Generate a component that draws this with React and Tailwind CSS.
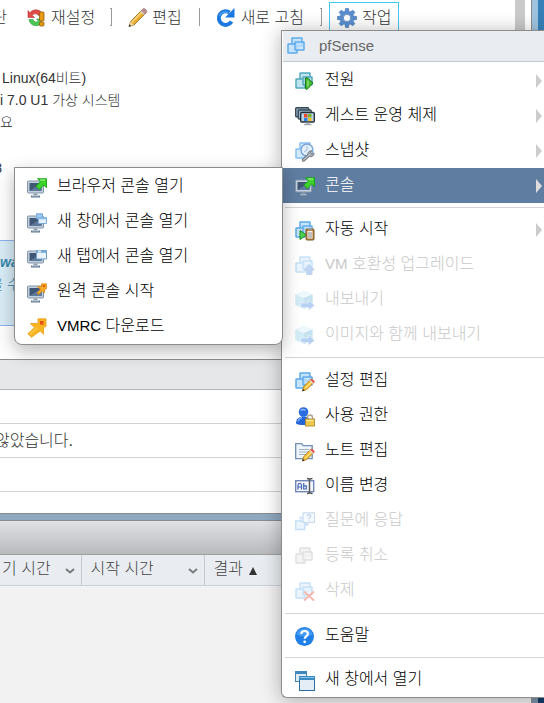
const Boxes = ({ stroke = '#5eaaea', fill = '#c4e3fd' }) => (
  <g fill={fill} stroke={stroke} strokeWidth="1.5">
    <rect x="5" y="1" width="10" height="8" rx="0.5" />
    <rect x="1" y="7" width="9" height="9" rx="0.5" />
    <rect x="8" y="5" width="9" height="8" rx="0.5" fillOpacity="0.75" />
  </g>
)

const Monitor = () => (
  <g>
    <rect x="0.5" y="3" width="16" height="12" rx="1" fill="#c3d0de" stroke="#8194aa" />
    <rect x="2.5" y="5" width="12" height="8" fill="#3f5674" />
    <path d="M2.5 13 L14.5 5 V13 Z" fill="#5d7899" />
    <path d="M6.5 15.5h4v2h-4z" fill="#8b9caf" />
    <path d="M4 17.5h9v2H4z" fill="#5f7690" />
    <path d="M5 17.5h7v0.8H5z" fill="#d5dee7" />
  </g>
)

const SmallPencil = () => (
  <g>
    <path d="M7.5 19 8.8 14.5 16 7.3l3 3L11.8 17.500z" fill="#f6bd2f" stroke="#a9731a" strokeWidth="0.8" />
    <path d="m10 16.3 7.5-7.5" stroke="#ffe48a" strokeWidth="1.2" />
    <path d="m15.3 8 1.6-1.6 3 3-1.6 1.6z" fill="#e84f4f" />
    <path d="m14.5 8.8.8-.8 3 3-.8.8z" fill="#d7dce0" />
    <path d="m7.2 19.3.7-2.4 1.7 1.7z" fill="#222" />
  </g>
)

const drawings = {
  vm: <Boxes />,
  power: (
    <>
      <Boxes stroke="#52a8bf" fill="#bfe4ee" />
      <path d="M10.5 6 12 5.5 18 11 12 17.500l-1.500-.7z" fill="#42b82e" stroke="#1d7a18" />
      <path d="M13 8.500v6" stroke="#b6ee93" />
    </>
  ),
  guest: (
    <>
      <rect x="0.7" y="0.7" width="13" height="9" rx="1" fill="#8fb5cf" stroke="#3b4853" strokeWidth="1.4" />
      <rect x="3.2" y="3" width="13" height="9" rx="1" fill="#8fb5cf" stroke="#3b4853" strokeWidth="1.4" />
      <rect x="5.7" y="5.5" width="13.6" height="9.5" rx="1" fill="#b8d2e6" stroke="#28323b" strokeWidth="1.4" />
      <path d="M9 7h3.5v3.5H9z" fill="#e64a26" />
      <path d="M13 7h3.500v3.500H13z" fill="#74b52b" />
      <path d="M9 11h3.500v3H9z" fill="#2f7fe0" />
      <path d="M13 11h3.500v3H13z" fill="#f5c11b" />
      <path d="M11 15.500h3.500V17h2v1.200H9V17h2z" fill="#a4adb5" />
    </>
  ),
  snapshot: (
    <>
      <Boxes stroke="#86c0f2" fill="#d3e9fc" />
      <circle cx="12" cy="8" r="6" fill="#e3f0fb" stroke="#7aa6d6" strokeWidth="1.4" />
      <path d="M12 4v4l-3 2" stroke="#9cb9d8" fill="none" />
      <path d="m8.5 18 6-5.5" stroke="#6f767e" strokeWidth="3.4" strokeLinecap="round" />
      <path d="M13 13a3.3 3.3 0 0 1 4-4.2L15.6 10.500l1.6 1.6 1.8-1.2a3.3 3.3 0 0 1-4.6 3.6z" fill="#a5abb1" stroke="#6f767e" strokeWidth="0.8" />
      <path d="m8.5 18 6-5.5" stroke="#b9bec3" strokeWidth="1.6" strokeLinecap="round" />
    </>
  ),
  browser: (
    <>
      <Monitor />
      <path d="M10.500.7h9V9.700l-2.800-2.700-4.400 4.500-3.300-3.300 4.400-4.500z" fill="#3ed32b" stroke="#16a01a" strokeWidth="0.9" />
      <path d="M13 2h5" stroke="#adf59a" />
    </>
  ),
  newWindow: (
    <>
      <Monitor />
      <path d="M9.5.8h6v5h-6z" fill="#9cc7ee" stroke="#74a7d8" />
      <path d="M11.5 4.5h8v6h-8z" fill="#e3f1fc" stroke="#7cabd8" />
      <path d="M11.5 4.5h8v1.8h-8z" fill="#8bbde9" />
    </>
  ),
  newTab: (
    <>
      <Monitor />
      <path d="M9.5 2.5h10v8.5h-10z" fill="#e8f3fc" stroke="#6f9fca" />
      <path d="M9.5 2.5h10v2.3h-10z" fill="#76a9d6" />
      <path d="M11 2.5h3v2h-3z" fill="#d6eafb" />
    </>
  ),
  remote: (
    <>
      <Monitor />
      <path d="M14.5.8h5v5h-1.4l-.7 4.2-2-2.2-3.6 3.7-1.7-1.7 3.6-3.6L10.4 4l4.1-.6z" fill="#f7a91f" stroke="#d9850f" strokeWidth="0.7" />
      <path d="M16 2h2v2h-2z" fill="#e2591a" />
    </>
  ),
  vmrc: (
    <>
      <path d="M11 .8h8v8h-2.500v7.500l-3.200-3.400L4.500 19.300l-3.700-3.600 6.700-6.200L3.200 5.500H11z" fill="#f9b422" stroke="#e8a01a" strokeWidth="0.8" strokeLinejoin="round" />
      <rect x="13" y="3" width="3.6" height="3.6" fill="#e5521b" />
      <path d="m3 16.500 7-6.8" stroke="#ffd668" />
    </>
  ),
  autostart: (
    <>
      <Boxes />
      <path d="M5 9.500 11.500 14 5 18.500z" fill="#4fd152" stroke="#198c25" />
      <rect x="11" y="8" width="8" height="11" rx="1" fill="#b88642" stroke="#7d5520" />
      <path d="M12.500 10h5v7.500h-5z" fill="#f4f2ec" />
      <path d="M13 12h4M13 14h4M13 16h4" stroke="#777" strokeWidth="0.8" />
      <path d="M13 7h4v2h-4z" fill="#999" />
    </>
  ),
  upgrade: (
    <>
      <Boxes />
      <path d="m14 8.500 5.500 5.500h-2.500v4.500h-5.500v-4.500H9z" fill="#4b86da" stroke="#3a75c4" strokeWidth="0.8" />
    </>
  ),
  exportVm: (
    <>
      <path d="M9 0 17.500 3.500v10.500L9 18 .3 14V3.500z" fill="#86cbe6" />
      <path d="M9 0 17.500 3.500 9 7 .3 3.500z" fill="#c9ecf6" />
      <path d="M9 7 17.500 3.500v10.500L9 18z" fill="#5badd0" />
      <path d="M6 12h7.500V9l6 5.500-6 5v-3H6z" fill="#2f7ade" stroke="#d9eafb" strokeWidth="0.6" />
    </>
  ),
  settings: (
    <>
      <Boxes />
      <SmallPencil />
    </>
  ),
  permission: (
    <>
      <circle cx="8.5" cy="5" r="4.8" fill="#2a6be0" />
      <path d="M1 16.500c0-4.500 3-7 7.500-7s7 2.500 7 7c-3 2-11.500 2-14.500 0z" fill="#2464d8" />
      <path d="M5.500 3.500a3.500 3 0 0 1 5 0" stroke="#8fb9ff" fill="none" strokeWidth="1.400" />
      <path d="M3 14.500c.5-2 2-3.500 4-3.800" stroke="#7dafff" fill="none" strokeWidth="1.400" />
      <path d="M12.500 12.500v-2a2.500 2.500 0 0 1 5 0v2" stroke="#aaa794" strokeWidth="1.500" fill="none" />
      <rect x="10.500" y="12" width="9" height="7" fill="#efc74a" stroke="#b08d30" strokeWidth="0.900" />
      <path d="M11.500 13.500h7" stroke="#fff0a6" />
    </>
  ),
  note: (
    <>
      <path d="M.7 1.700h6l1.500 2h9v13H.7z" fill="#f0f5fa" stroke="#6f8fb3" strokeWidth="1.300" />
      <path d="M4 7.500h10M4 10h10M4 12.500h7" stroke="#9fb2c6" />
      <SmallPencil />
    </>
  ),
  rename: (
    <>
      <rect x="0.700" y="3.700" width="18" height="11" fill="#f3f6fd" stroke="#7287b8" strokeWidth="1.400" />
      <path d="M3 12.500V8l1-1.500h1.500l1 1.500v4.500M3 10h3.500M8.700 6v6h2.600V8.800H8.700" fill="none" stroke="#4566b8" strokeWidth="1.200" />
      <path d="M12 1.500c2 0 2.500.5 2.500 1.500v12c0 1-.5 1.500-2.500 1.500M17.500 1.500c-2 0-3 .5-3 1.500M14.500 15c0 1 1 1.500 3 1.500" fill="none" stroke="#555" strokeWidth="1.400" />
    </>
  ),
  question: (
    <>
      <path d="M5 5h8v8H5z" fill="#b9dcfa" stroke="#5eaaea" />
      <path d="M.7 9h9v8.500h-9z" fill="#c4e3fd" stroke="#5eaaea" strokeWidth="1.400" />
      <path d="M8 .8h11.500v9.500H14l-2.500 2.500v-2.500H8z" fill="#e9f3fc" stroke="#6a9bd0" strokeWidth="1.200" />
      <path d="M12.200 4.200c0-2 3.500-2 3.500 0 0 1.300-1.800 1.200-1.800 2.500M13.900 7.800v1" fill="none" stroke="#4c7fbd" strokeWidth="1.200" />
    </>
  ),
  unregister: <Boxes stroke="#a8a8a8" fill="#e2e2e2" />,
  remove: (
    <>
      <Boxes />
      <path d="m9 9.500 10 9M19 9.500l-10 9" stroke="#e0371e" strokeWidth="2" />
    </>
  ),
  help: (
    <>
      <circle cx="9.500" cy="9.500" r="9.500" fill="#2080e8" />
      <path d="M1.500 7.500a8.300 8.300 0 0 1 16 0c-4 2.500-12 2.500-16 0z" fill="#469cf5" />
      <path d="M6.300 7c0-4 6.600-4 6.600-.2 0 2.300-3.200 2.400-3.200 4.900" fill="none" stroke="#fff" strokeWidth="2.200" />
      <circle cx="9.700" cy="14.800" r="1.400" fill="#fff" />
    </>
  ),
  windows: (
    <>
      <rect x="0.500" y="0.500" width="11" height="10" fill="#dfeaf4" stroke="#4885b4" />
      <path d="M0 0h12v3H0z" fill="#3f86bd" />
      <rect x="4.500" y="5.500" width="15" height="14" fill="#e4edf6" stroke="#2f6f9f" />
      <path d="M4 5h16v4H4z" fill="#3c8ac4" />
      <path d="M5 6h14v1H5z" fill="#8cc3ec" />
    </>
  ),
  reset: (
    <>
      <path d="M1 2.500v7h6.500L5.300 7.300C7 5.200 10 5.500 11.500 7.500L15.500 6C13 1 6.500.5 3 4.700z" fill="#e04b49" stroke="#b52d33" strokeWidth="0.600" />
      <path d="M2 11.500c1 6.500 8.500 8 12 4V11H9.500l2 2c-2 2-4.500 1-5.500-1.500z" fill="#4bc654" stroke="#29953b" strokeWidth="0.600" />
      <rect x="12.500" y="4" width="4.500" height="9" rx="1" fill="#e69a16" stroke="#8f5d0d" strokeWidth="0.800" />
      <rect x="12.500" y="14" width="4.500" height="4" rx="1" fill="#e69a16" stroke="#8f5d0d" strokeWidth="0.800" />
    </>
  ),
  pencil: (
    <>
      <path d="m1 18.500 1.500-5L14 2 17.500 5.500 6 17z" fill="#e8ab34" stroke="#8d6420" strokeWidth="0.800" />
      <path d="m4 14 10.500-10.500" stroke="#ffdc82" strokeWidth="1.300" />
      <path d="m13.500 2.500 1.800-1.800c1-.8 4.200 2 3.300 3.300L17 6z" fill="#c68a8b" stroke="#7f5a5c" strokeWidth="0.600" />
      <path d="m12.500 3.500 1-1L17 6l-1 1z" fill="#c7ccd1" />
      <path d="m1 18.500 1.500-5 3.500 3.500z" fill="#ecd3a4" />
      <path d="m.7 18.800.8-2.500 1.700 1.700z" fill="#333" />
    </>
  ),
  refresh: (
    <>
      <path d="M15.500 13.500A6.800 6.800 0 1 1 13.500 4.500" fill="none" stroke="#1b78e0" strokeWidth="4" />
      <path d="M18.500 0v9.500H9z" fill="#1b78e0" />
      <path d="M3.500 8A6 6 0 0 1 12 4.500" fill="none" stroke="#55a9f5" strokeWidth="1.200" />
    </>
  ),
  gear: (
    <>
      <g fill="#5a8ed0" stroke="#3e6ca8" strokeWidth="0.600">
        {[0, 45, 90, 135, 180, 225, 270, 315].map((a) => (
          <path key={a} d="M8 4 8.500.4h3L12 4z" transform={`rotate(${a} 10 10)`} />
        ))}
      </g>
      <circle cx="10" cy="10" r="5.500" fill="none" stroke="#5a8ed0" strokeWidth="3.400" />
      <circle cx="10" cy="10" r="3.700" fill="#fff" stroke="#4a76ae" strokeWidth="0.800" />
    </>
  ),
}

const Icon = ({ name, className = '' }) => (
  <svg viewBox="0 0 20 20" className={`size-5 shrink-0 ${className}`} aria-hidden="true">
    {drawings[name]}
  </svg>
)

const groups = [
  {
    pad: 'pt-px pb-1',
    items: [
      { icon: 'power', text: '전원', sub: true },
      { icon: 'guest', text: '게스트 운영 체제', sub: true },
      { icon: 'snapshot', text: '스냅샷', sub: true },
      { icon: 'browser', text: '콘솔', sub: true, active: true },
    ],
  },
  {
    pad: 'pt-1 pb-[5px]',
    items: [
      { icon: 'autostart', text: '자동 시작', sub: true },
      { icon: 'upgrade', latin: 'VM', text: ' 호환성 업그레이드', disabled: true },
      { icon: 'exportVm', text: '내보내기', disabled: true },
      { icon: 'exportVm', text: '이미지와 함께 내보내기', disabled: true },
    ],
  },
  {
    pad: 'py-[5px]',
    items: [
      { icon: 'settings', text: '설정 편집' },
      { icon: 'permission', text: '사용 권한' },
      { icon: 'note', text: '노트 편집' },
      { icon: 'rename', text: '이름 변경' },
      { icon: 'question', text: '질문에 응답', disabled: true },
      { icon: 'unregister', text: '등록 취소', disabled: true },
      { icon: 'remove', text: '삭제', disabled: true },
    ],
  },
  { pad: 'py-1', items: [{ icon: 'help', text: '도움말' }] },
  { pad: 'pt-1', items: [{ icon: 'windows', text: '새 창에서 열기' }] },
]

const consoleItems = [
  { icon: 'browser', text: '브라우저 콘솔 열기' },
  { icon: 'newWindow', text: '새 창에서 콘솔 열기' },
  { icon: 'newTab', text: '새 탭에서 콘솔 열기' },
  { icon: 'remote', text: '원격 콘솔 시작' },
  { icon: 'vmrc', latin: 'VMRC', text: ' 다운로드' },
]

const MenuItem = ({ item }) => (
  <button
    type="button"
    role="menuitem"
    disabled={item.disabled}
    className={`flex h-[35px] w-full items-center pl-3 pr-[2px] text-left ${item.active ? 'bg-[#5f7da0] text-white' : 'text-black'}`}
  >
    <Icon name={item.icon} className={`mt-[2px] ${item.disabled ? 'opacity-35' : ''}`} />
    <span className={`ml-[10px] flex-1 whitespace-pre pb-[2px] leading-5 ${item.disabled ? 'text-[#c8c8c8]' : ''}`}>
      {item.latin && <span className="text-[15px]">{item.latin}</span>}
      {item.text}
    </span>
    {item.sub && (
      <svg viewBox="0 0 6 14" className={`h-[14px] w-[6px] ${item.active ? 'text-[#dddddd]' : 'text-[#cccccc]'}`}>
        <path d="M0 0 6 7 0 14z" fill="currentColor" />
      </svg>
    )}
  </button>
)

const ActionMenu = () => (
  <div role="menu" className="absolute top-[30px] right-0 left-[281px] overflow-hidden rounded-bl-md border border-r-0 border-[#8c8c8c] bg-white pl-px shadow-[0_2px_20px_rgba(0,0,0,0.3)]">
    <div className="flex h-[31px] items-center border-b border-[#c5c9d0] bg-[#e9edf1] pl-1 text-[15px] text-[#666666]">
      <Icon name="vm" className="mt-[2px]" />
      <span className="ml-3">pfSense</span>
    </div>
    {groups.map((group, i) => (
      <div key={i}>
        {i > 0 && <div className="ml-[2px] h-px bg-[#d4d4d4]" />}
        <div className={group.pad}>
          {group.items.map((item) => (
            <MenuItem key={item.text} item={item} />
          ))}
        </div>
      </div>
    ))}
  </div>
)

const ConsoleMenu = () => (
  <div role="menu" className="absolute top-[167px] left-[14px] w-[269px] rounded-b-lg border border-[#8c8c8c] bg-white pt-px shadow-[0_6px_18px_rgba(0,0,0,0.28)]">
    {consoleItems.map((item) => (
      <MenuItem key={item.text} item={item} />
    ))}
  </div>
)

const Bracket = () => <span className="h-[18px] w-[2px] border-y border-r border-[#999999]" />

const Toolbar = () => (
  <div className="flex h-[34px] items-center whitespace-nowrap text-[#333333]">
    <button type="button" className="flex w-[7px] justify-end overflow-hidden pt-px">단</button>
    <button type="button" className="ml-5 flex items-center gap-1 pt-px">
      <Icon name="reset" />
      재설정
    </button>
    <div className="ml-[15px] flex items-center">
      <Bracket />
      <button type="button" className="ml-4 flex items-center gap-1 pt-px">
        <Icon name="pencil" />
        편집
      </button>
    </div>
    <span className="ml-[17px] h-[18px] w-px bg-[#999999]" />
    <button type="button" className="ml-4 flex items-center gap-[5px] pt-px">
      <Icon name="refresh" />
      새로 고침
    </button>
    <div className="ml-4 flex items-center">
      <Bracket />
      <button type="button" className="ml-[7px] flex h-[30px] w-[70px] items-center gap-[5px] border border-[#3fc8f4] pt-px pl-[7px]">
        <Icon name="gear" />
        작업
      </button>
    </div>
  </div>
)

const Chevron = () => (
  <svg viewBox="0 0 10 6" className="mt-1 h-[6px] w-[10px]">
    <path d="m1 1 4 3.500L9 1" fill="none" stroke="#7b7b7b" strokeWidth="2" />
  </svg>
)

const TaskTable = () => (
  <table className="w-full table-fixed border-collapse text-[#444444]">
    <thead>
      <tr className="h-[30px] border-b border-[#cfd2d5] bg-[#e9edf1] text-left">
        <th className="w-[81px] border-r border-[#c6c9cc] p-0 font-light">
          <div className="flex items-center justify-between pr-[6px] pb-[2px] pl-[2px]">
            기 시간
            <Chevron />
          </div>
        </th>
        <th className="w-[123px] border-r border-[#c6c9cc] p-0 font-light">
          <div className="flex items-center justify-between pr-[6px] pb-[2px] pl-[9px]">
            시작 시간
            <Chevron />
          </div>
        </th>
        <th className="p-0 font-light">
          <div className="flex items-center gap-[6px] pb-[2px] pl-[9px]">
            결과
            <svg viewBox="0 0 8 8" className="mt-1 size-2">
              <path d="M4 0 8 8H0z" fill="#333" />
            </svg>
          </div>
        </th>
      </tr>
    </thead>
  </table>
)

const App = () => {
  return (
    <div className="relative flex min-h-screen overflow-hidden bg-white font-['Liberation_Sans','Noto_Sans_CJK_KR',sans-serif] text-base leading-6 font-light">
      <main className="flex min-w-0 flex-1 flex-col">
        <div className="flex h-[359px]">
          <div className="min-w-0 flex-1">
            <Toolbar />
            <div className="mt-[33px] h-[173px] text-sm leading-[22px] whitespace-nowrap text-[#333333]">
              <p className="pl-[2px]">Linux(64비트)</p>
              <p>i 7.0 U1 가상 시스템</p>
              <p>요</p>
              <p className="mt-6 flex w-[2px] justify-end overflow-hidden">8</p>
            </div>
            <div className="h-[86px] w-[270px] border-y border-[#8db4f2] bg-[#d9edf7] pt-[10px] text-sm leading-[22px] text-[#3a87ad]">
              <p className="font-bold italic">ware</p>
              <p className="w-[14px] overflow-hidden whitespace-nowrap"><span className="flex w-[20px] justify-end">을 수</span></p>
            </div>
          </div>
          <div className="w-[10px] bg-[#cacaca]" />
          <div className="w-[6px]" />
        </div>
        <div className="h-[31px] border-y border-t-[#8c8c8c] border-b-[#b5b5b5] bg-[#e6e7e9]" />
        <div className="h-[34px] border-b border-[#d2d2d2]" />
        <div className="flex h-[34px] items-center border-b border-[#d2d2d2] text-[#333333]">
          <span className="flex w-[73px] justify-end overflow-hidden whitespace-nowrap">않았습니다.</span>
        </div>
        <div className="h-[34px] border-b border-[#d2d2d2]" />
        <div className="h-[21px]" />
        <div className="h-2 border-y border-[#8c8c8c] bg-[#8fa9c1]" />
        <div className="h-[34px] border-b border-[#a0a0a0] bg-linear-to-b from-[#e0e2e6] to-[#b9babd]" />
        <TaskTable />
        <div className="flex-1 bg-[#f2f2f2]" />
      </main>
      <aside className="flex w-[13px] flex-col border-l border-[#8c8c8c]">
        <div className="flex-1 border-r-6 border-[#3580b8] bg-[#9fc3df]" />
        <div className="h-2 border-r-6 border-[#143a66] bg-[#7c90a8]" />
      </aside>
      <ActionMenu />
      <ConsoleMenu />
    </div>
  )
}

export default App
